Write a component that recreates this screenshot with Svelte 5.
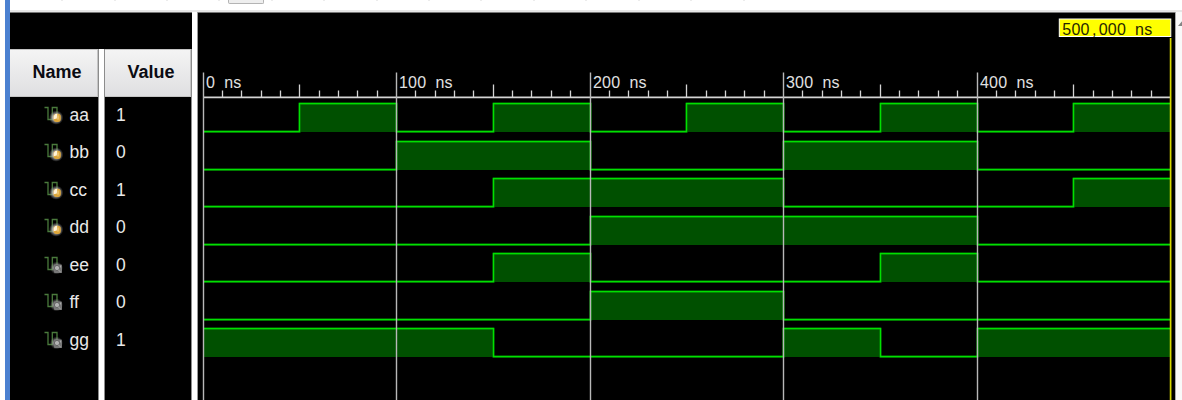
<script>
  const X0 = 5.5;
  const K = 1.935;
  const px = (t) => Math.floor(t * K) + X0;
  const signals = [
    { name: 'aa', value: '1', high: [[50, 100], [150, 200], [250, 300], [350, 400], [450, 500]] },
    { name: 'bb', value: '0', high: [[100, 200], [300, 400]] },
    { name: 'cc', value: '1', high: [[150, 300], [450, 500]] },
    { name: 'dd', value: '0', high: [[200, 400]] },
    { name: 'ee', value: '0', high: [[150, 200], [350, 400]], internal: true },
    { name: 'ff', value: '0', high: [[200, 300]], internal: true },
    { name: 'gg', value: '1', high: [[0, 150], [300, 350], [400, 500]], internal: true }
  ];
  const top = (i) => Math.round(91 + i * 37.5);
  function trace(s, i) {
    const y = top(i) + 0.5;
    const low = y + 28;
    let d = s.high[0][0] === 0 ? `M${px(0)} ${y}` : `M${px(0)} ${low}`;
    for (const [a, b] of s.high) {
      if (a > 0) d += `H${px(a)}V${y}`;
      d += `H${px(b)}`;
      if (b < 500) d += `V${low}`;
    }
    if (s.high.at(-1)[1] < 500) d += `H${px(500)}`;
    return d;
  }
  const ticks = Array.from({ length: 50 }, (_, i) => i * 10);
  const majors = [0, 100, 200, 300, 400];
  const cells = (x, text) => [...text].map((c, i) => x + i * 9.1 + (c === ',' ? 2.5 : 0)).join(' ');
</script>

<div class="app">
  <div class="toolbar">
    <div class="button"></div>
    {#each [61, 114, 166, 218, 271, 323, 376, 428, 480, 533, 585, 638, 690, 743] as x}
      <i style="left:{x}px"></i>
    {/each}
  </div>
  <div class="body">
    <div class="edge"></div>
    <div class="table">
      <div class="blank"></div>
      <div class="cols">
        <div class="col names">
          <div class="head">Name</div>
          {#each signals as s}
            <div class="row">
              <svg class="icon" width="20" height="20" viewBox="0 0 20 20">
                <defs>
                  <radialGradient id="glow">
                    <stop offset="0.45" stop-color="#b4b4b4" />
                    <stop offset="1" stop-color="#888" stop-opacity="0" />
                  </radialGradient>
                </defs>
                <path d="M0.5 2.5H4V14.5H8.3V2.5H13V10" fill="none" stroke="#4a7a3c" stroke-width="1.3" />
                {#if s.internal}
                  <circle cx="12.5" cy="13" r="6.5" fill="url(#glow)" opacity="0.75" />
                  <rect x="10" y="9.5" width="8" height="8.5" rx="1" fill="#777" />
                  <circle cx="13" cy="13" r="2.6" fill="#b4b4b4" stroke="#666" />
                  <path d="M14 14.5l3 3M16.5 10.5v2" stroke="#a8a8a8" />
                {:else}
                  <circle cx="12.2" cy="12.6" r="7.2" fill="url(#glow)" />
                  <rect x="9.5" y="8.7" width="7.3" height="8.3" rx="3" fill="#dda63a" />
                  <path d="M9.7 14.2Q9 8.7 13.3 8.7L12.8 13.5Z" fill="#fff3d8" />
                  <path d="M14 10.5v4" stroke="#f7dc9c" />
                {/if}
              </svg>
              <span>{s.name}</span>
            </div>
          {/each}
        </div>
        <div class="gap"></div>
        <div class="col values">
          <div class="head">Value</div>
          {#each signals as s}
            <div class="row"><span>{s.value}</span></div>
          {/each}
        </div>
      </div>
    </div>
    <div class="split"></div>
    <svg class="wave" width="977" height="388" viewBox="0 0 977 388">
      <path d="M0 .5H977" stroke="#777" />
      {#each signals as s, i}
        {#each s.high as [a, b]}
          <rect x={px(a)} y={top(i)} width={px(b) - px(a)} height="29" fill="#005000" />
        {/each}
        <path d={trace(s, i)} fill="none" stroke="#007800" stroke-width="2" transform="translate(0 .3)" />
        <path d={trace(s, i)} fill="none" stroke="#00e000" stroke-width="1.3" />
      {/each}
      <path d="M5 85.4H973" stroke="#d4d4d4" stroke-width="1.6" />
      {#each ticks as t}
        {#if t % 100}
          <path d="M{px(t)} {t % 50 ? 78.5 : 72.5}V85" stroke="#d4d4d4" stroke-width="1.3" />
        {/if}
      {/each}
      {#each majors as t}
        <path d="M{px(t)} 60.5V388" stroke="#b8b8b8" stroke-width="1.4" />
        <text class="time" x={cells(px(t) + 2.5, `${t} ns`)} y="75.5">{t} ns</text>
      {/each}
      <rect x="861.3" y="7" width="111.5" height="17.5" fill="#ff0" stroke="#fff" />
      <text class="time dark" x={cells(864.3, '500,000 ns')} y="22.5">500,000 ns</text>
      <path d="M972.6 26V388" stroke="#d8d800" stroke-width="1.7" />
    </svg>
    <div class="scroll">
      <svg width="7" height="388" viewBox="0 0 7 388"><path d="M2 14L7 8V14Z" fill="#858585" /></svg>
    </div>
  </div>
</div>

<style>
  :global(body) { background: #fff; overflow: hidden; }
  .app {
    width: 1182px; height: 400px; overflow: hidden; display: flex; flex-direction: column;
    font-family: "Liberation Sans", Arial, sans-serif; background: #fff;
    border-left: 5px solid #fefefe; box-sizing: border-box;
  }
  .toolbar {
    height: 12px; flex: none; position: relative; box-sizing: border-box;
    box-shadow: inset 0 -2px #e6e6e6; border-left: 5px solid #4a80d0;
  }
  .toolbar i { position: absolute; top: 0; width: 2px; height: 1px; margin-left: -10px; background: #ececec; }
  .button {
    width: 36px; height: 4px; margin-left: 218px; box-sizing: border-box; background: #eee;
    border: 1px solid #b4b4b4; border-top: 0; border-radius: 0 0 2px 2px;
  }
  .body { display: flex; height: 388px; }
  .edge { width: 5px; background: #4a80d0; }
  .table { width: 182px; display: flex; flex-direction: column; background: #000; border-top: 1px solid #777; box-sizing: border-box; }
  .blank { height: 36px; flex: none; }
  .cols { display: flex; flex: 1; }
  .col { box-sizing: border-box; border-right: 1px solid #8c8c8c; }
  .names { width: 89px; }
  .values { width: 88px; border-left: 1px solid #8c8c8c; }
  .gap { width: 5px; background: #fff; }
  .head {
    height: 48px; box-sizing: border-box; border: 1px solid #c4c4c4; border-width: 1px 1px 1px 0;
    background: linear-gradient(#f4f4f4, #dfdfe1); font-weight: 700; font-size: 18px;
    line-height: 45px; color: #0b0b12; padding-left: 22.5px; margin-bottom: -1px;
  }
  .row { height: 37.5px; display: flex; align-items: center; color: #e9e9e9; font-size: 17.5px; line-height: 37px; }
  .row span { padding-top: 1px; }
  .names .row { padding-left: 34px; }
  .values .row { padding-left: 11px; }
  .icon { width: 20px; height: 20px; margin-right: 5.5px; flex: none; }
  .split { width: 6px; background: #fff; border-right: 1px solid #999; box-sizing: border-box; }
  .wave { display: block; background: #000; flex: none; }
  .time { font-size: 16px; fill: #e2e2e2; white-space: pre; }
  .dark { fill: #262600; }
  .scroll { flex: 1; background: #f9f9f9; border-left: 1px solid #aaa; overflow: hidden; }
  .scroll svg { display: block; }
</style>
